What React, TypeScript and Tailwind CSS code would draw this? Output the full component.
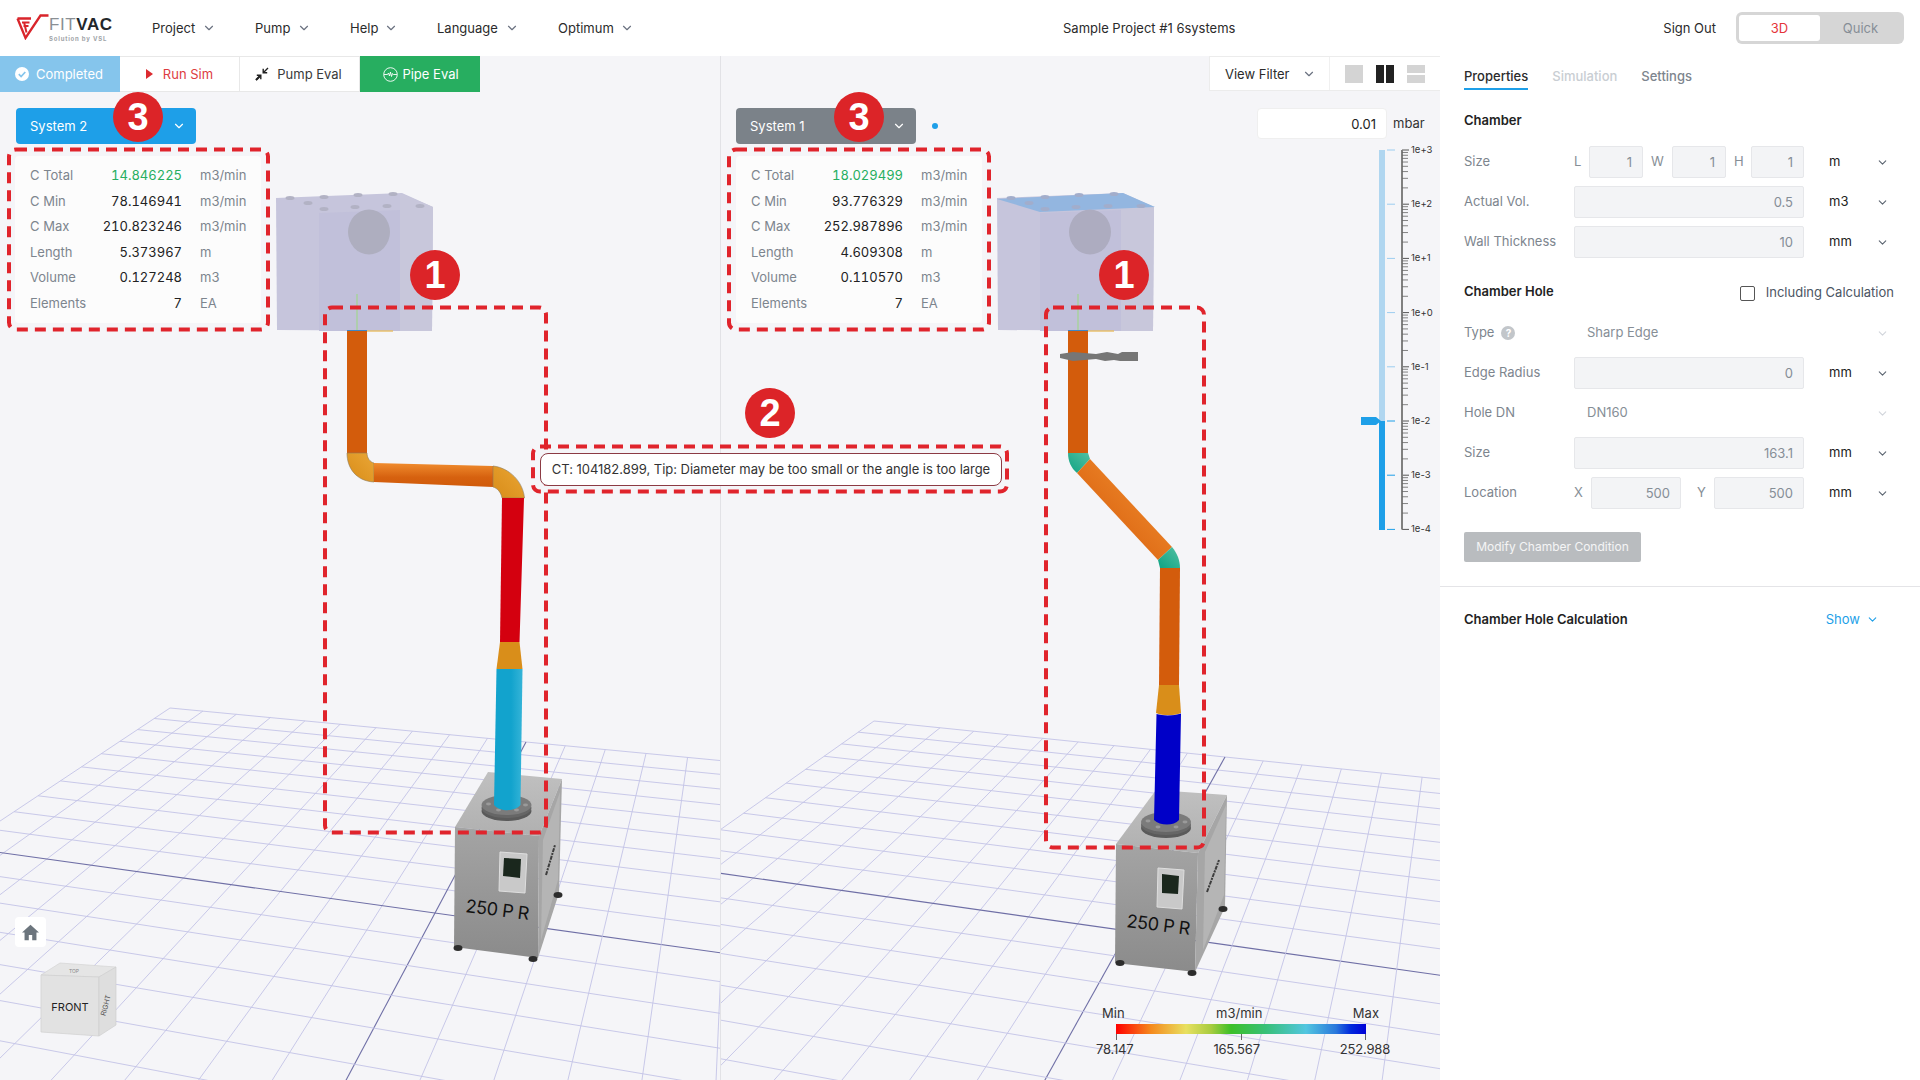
import React from "react";
import { ChevronDown } from "lucide-react";

type Pt = [number, number];

function makeHomography(p00: Pt, p10: Pt, p01: Pt, p11: Pt) {
  const [x0, y0] = p00;
  const [x1, y1] = p10;
  const [x2, y2] = p11;
  const [x3, y3] = p01;
  const dx1 = x1 - x2, dx2 = x3 - x2, dx3 = x0 - x1 + x2 - x3;
  const dy1 = y1 - y2, dy2 = y3 - y2, dy3 = y0 - y1 + y2 - y3;
  const det = dx1 * dy2 - dx2 * dy1;
  const g = (dx3 * dy2 - dx2 * dy3) / det;
  const h = (dx1 * dy3 - dx3 * dy1) / det;
  const a = x1 - x0 + g * x1, b = x3 - x0 + h * x3, c = x0;
  const d = y1 - y0 + g * y1, e = y3 - y0 + h * y3, f = y0;
  return {
    denom: (s: number, t: number) => g * s + h * t + 1,
    map: (s: number, t: number): Pt => {
      const w = g * s + h * t + 1;
      return [(a * s + b * t + c) / w, (d * s + e * t + f) / w];
    },
  };
}

function Grid({ p00, p10, p01, p11 }: { p00: Pt; p10: Pt; p01: Pt; p11: Pt }) {
  const H = makeHomography(p00, p10, p01, p11);
  const lines: React.ReactNode[] = [];
  const draw = (fn: (q: number) => [number, number], key: string, axis: boolean) => {
    let end = 1;
    for (let q = 0; q <= 1; q += 0.01) {
      const [s, t] = fn(q);
      if (H.denom(s, t) < 0.08) break;
      end = q;
    }
    const a = H.map(...fn(0));
    const b = H.map(...fn(end));
    lines.push(
      <line key={key} x1={a[0]} y1={a[1]} x2={b[0]} y2={b[1]} stroke={axis ? "#6f6fa6" : "#c3c3e6"} strokeWidth={axis ? 1.1 : 0.9} />
    );
  };
  for (let i = 0; i <= 20; i++) {
    const v = i / 10;
    draw((q) => [v, q * 2], `a${i}`, i === 10);
    draw((q) => [q * 2, v], `b${i}`, i === 10);
  }
  return <g>{lines}</g>;
}

const poly = (pts: number[]) => pts.join(" ");

function Pump({ right }: { right: boolean }) {
  const top = right
    ? [1156, 790, 1227, 795, 1198, 853, 1116, 844]
    : [488, 772, 562, 779, 539, 836, 455, 827];
  const front = right
    ? [1116, 844, 1198, 853, 1195, 972, 1115, 963]
    : [455, 827, 539, 836, 538, 958, 454, 947];
  const side = right
    ? [1198, 853, 1227, 795, 1225, 907, 1195, 972]
    : [539, 836, 562, 779, 559, 893, 538, 958];
  const panel = right
    ? [1205, 852, 1226, 805, 1224, 895, 1203, 950]
    : [543, 840, 560, 792, 558, 880, 541, 940];
  const disp = right
    ? [1158, 868, 1184, 870, 1182, 909, 1157, 907]
    : [500, 852, 527, 854, 525, 893, 499, 891];
  const scr = right
    ? [1162, 874, 1179, 876, 1178, 894, 1162, 893]
    : [504, 858, 521, 859, 520, 878, 503, 876];
  const flange = right ? [1166, 822] : [506.5, 805];
  const feet = right
    ? [[1120, 963], [1192, 973], [1223, 909]]
    : [[458, 948], [533, 959], [558, 895]];
  const text = right ? [1126, 927] : [465, 912];
  const logo = right ? [[1207, 892], [1219, 860]] : [[546, 875], [555, 845]];
  const boltOffsets = [[-18, -1], [-8, 5], [10, 5], [19, 0], [-8, -6], [10, -6]];
  return (
    <g>
      <polygon points={poly(top)} fill="url(#pumpTop)" />
      <polygon points={poly(front)} fill="url(#pumpFront)" />
      <polygon points={poly(side)} fill="#a6a6a6" />
      <polygon points={poly(panel)} fill="#b5b5b5" />
      <polygon points={poly(disp)} fill="#c9c9c9" stroke="#dedede" strokeWidth="1" />
      <polygon points={poly(scr)} fill="#1a271d" />
      <line x1={logo[0][0]} y1={logo[0][1]} x2={logo[1][0]} y2={logo[1][1]} stroke="#3d3d3d" strokeWidth="2" strokeDasharray="4 1 2 1" />
      {feet.map((f, i) => (
        <ellipse key={i} cx={f[0]} cy={f[1]} rx="4.5" ry="3" fill="#2c2c2c" />
      ))}
      <ellipse cx={flange[0]} cy={flange[1] + 6} rx="25" ry="10" fill="#5a5a5a" />
      <ellipse cx={flange[0]} cy={flange[1] + 3} rx="25" ry="10" fill="#666666" />
      <ellipse cx={flange[0]} cy={flange[1]} rx="25" ry="10" fill="#7b7b7b" />
      {boltOffsets.map((o, i) => (
        <ellipse key={i} cx={flange[0] + o[0]} cy={flange[1] + o[1]} rx="2.5" ry="1.4" fill="#9a9a9a" />
      ))}
      <text
        x={text[0]}
        y={text[1]}
        fontSize="18"
        letterSpacing="-0.4"
        fontFamily="Inter, sans-serif"
        fill="#111"
        transform={`rotate(7 ${text[0]} ${text[1]})`}
      >
        250 P R
      </text>
    </g>
  );
}

function Chamber({ ox, blue }: { ox: number; blue: boolean }) {
  const bolts = [
    [290, 198], [308, 203], [324, 197], [324, 209], [355, 207], [358, 195], [387, 206], [393, 194], [420, 206],
  ];
  return (
    <g transform={`translate(${ox} 0)`}>
      <polygon points="276,198 402,193 433,207 432,331 277,330" fill="#c6c5dc" />
      <polygon points="319,213 400,210 400,331 319,331" fill="#c1c0da" />
      <polygon points="400,193 433,207 432,331 400,331" fill="#c8c7db" />
      {blue && <polygon points="276,199 402,193 434,207 319,212" fill="#93b6e0" />}
      {bolts.map((b, i) => (
        <ellipse key={i} cx={b[0]} cy={b[1]} rx="4.5" ry="2" fill={blue ? "#a2adcb" : "#b2b2c4"} />
      ))}
      <ellipse cx="369" cy="232" rx="21" ry="22.5" fill={blue ? "#adacc0" : "#aeaebf"} />
      <line x1="357" y1="294" x2="357" y2="331" stroke="#a6d39a" strokeWidth="1.4" />
      <line x1="367" y1="331" x2="393" y2="331" stroke="#e9bd63" strokeWidth="1.4" />
      <line x1="347" y1="331" x2="367" y2="331" stroke="#3f86c4" strokeWidth="2" />
    </g>
  );
}

function Scene({ side }: { side: "left" | "right" }) {
  const left = side === "left";
  return (
    <svg
      className="absolute inset-0 w-full h-full"
      viewBox={left ? "0 56 720 1024" : "720 56 720 1024"}
      preserveAspectRatio="none"
    >
      <defs>
        <linearGradient id="pumpFront" x1="0" y1="0" x2="0" y2="1">
          <stop offset="0" stopColor="#a4a4a4" />
          <stop offset="1" stopColor="#8b8b8b" />
        </linearGradient>
        <linearGradient id="pumpTop" x1="0" y1="0" x2="0" y2="1">
          <stop offset="0" stopColor="#c0c0c0" />
          <stop offset="1" stopColor="#b0b0b0" />
        </linearGradient>
        <linearGradient id={`diag${side}`} x1="0" y1="0" x2="0" y2="1">
          <stop offset="0" stopColor="#f08c2e" />
          <stop offset="0.6" stopColor="#d6610f" />
          <stop offset="1" stopColor="#d05a0a" />
        </linearGradient>
        <linearGradient id={`diagR${side}`} x1="1" y1="0" x2="0" y2="1">
          <stop offset="0.15" stopColor="#f08c2e" />
          <stop offset="0.55" stopColor="#e2721b" />
          <stop offset="0.85" stopColor="#d05a0a" />
        </linearGradient>
        <linearGradient id={`elb${side}`} x1="1" y1="0" x2="0" y2="1">
          <stop offset="0" stopColor="#eaa636" />
          <stop offset="1" stopColor="#d88c18" />
        </linearGradient>
        <linearGradient id={`cy${side}`} x1="0" y1="0" x2="1" y2="0">
          <stop offset="0" stopColor="#12a3cd" />
          <stop offset="0.6" stopColor="#12a3cd" />
          <stop offset="1" stopColor="#35b4d8" />
        </linearGradient>
        <linearGradient id={`gr${side}`} x1="0" y1="1" x2="1" y2="0">
          <stop offset="0" stopColor="#0fa383" />
          <stop offset="1" stopColor="#52c0a2" />
        </linearGradient>
      </defs>
      {left ? (
        <>
          <Grid p00={[170, 708]} p10={[526, 742]} p01={[-39, 847]} p11={[435, 913]} />
          <Chamber ox={0} blue={false} />
          <Pump right={false} />
          <polygon points="347,331 367,331 367,453 347,453" fill="#d35c0c" />
          <path d="M347 453 C347 468 356 481 374 482 L374 463 C370 462 367 458 367 453 Z" fill={`url(#elb${side})`} stroke="#8d7a5a" strokeWidth="0.6" />
          <polygon points="374,463 493,466 493,487 374,482" fill={`url(#diag${side})`} />
          <path d="M493 466 C510 468 523 482 524.5 498 L502 498 C501 492 497 488 493 487 Z" fill={`url(#elb${side})`} stroke="#8d7a5a" strokeWidth="0.6" />
          <polygon points="502,498 524,498 519.5,642 500,642" fill="#d4000f" />
          <polygon points="500,642 519.5,642 522.5,669 496.5,669" fill="#d98e1a" />
          <path d="M496.5 669 L522.5 669 L520.5 805 C515 812 500 812 494 805 Z" fill={`url(#cy${side})`} />
        </>
      ) : (
        <>
          <Grid p00={[874, 721]} p10={[1225, 757]} p01={[669, 866]} p11={[1128, 931]} />
          <Chamber ox={721} blue />
          <Pump right />
          <polygon points="1068,331 1088,331 1088,453 1068,453" fill="#d35c0c" />
          <path d="M1060 354 L1073 352 L1096 354 L1107 352 L1118 354 L1122 352 L1138 352 L1138 361 L1120 361 L1114 360 L1105 361 L1096 359 L1073 361 L1060 358 Z" fill="#767676" />
          <path d="M1068 453 L1088 453 L1090 459 L1077 473 C1071 468 1068 461 1068 453 Z" fill={`url(#gr${side})`} />
          <polygon points="1090,459 1172,547 1158,560 1077,473" fill={`url(#diagR${side})`} />
          <path d="M1172 547 C1177 553 1180 560 1180 568 L1160 568 L1158 560 Z" fill={`url(#gr${side})`} />
          <polygon points="1160,568 1180,568 1179,685 1159,685" fill="#d35c0c" />
          <path d="M1159 685 L1179 685 L1181 713 C1174 716 1163 716 1156 713 Z" fill="#d98e1a" />
          <path d="M1156.5 714 C1163 716 1174 716 1181 713.5 L1179 820 C1174 826 1160 826 1154 820 Z" fill="#0000c8" />
        </>
      )}
      {left && (
        <g>
          <polygon points="41,975 60,963 116,967 99,977" fill="#e5e5e5" stroke="#d4d4d4" strokeWidth="0.7" />
          <polygon points="41,975 99,977 99,1036 41,1032" fill="#e2e2e2" stroke="#d0d0d0" strokeWidth="0.7" />
          <polygon points="99,977 116,967 116,1025 99,1036" fill="#dedede" stroke="#d0d0d0" strokeWidth="0.7" />
          <text x="70" y="1011" textAnchor="middle" fontSize="11" fontFamily="Inter, sans-serif" fill="#222">FRONT</text>
          <text x="108" y="1006" textAnchor="middle" fontSize="7" fontFamily="Inter, sans-serif" fill="#555" transform="rotate(-75 108 1006)">RIGHT</text>
          <text x="74" y="973" textAnchor="middle" fontSize="5" fontFamily="Inter, sans-serif" fill="#888">TOP</text>
        </g>
      )}
    </svg>
  );
}

function Stats({ rows }: { rows: [string, string, string][] }) {
  return (
    <div className="ml-[15px] mt-3 w-[246px] h-[167px] bg-[#fcfcfc] rounded-sm pl-[15px] pt-[7px] relative">
      {rows.map((r, i) => (
        <div key={r[0]} className="flex items-center h-[25.6px] text-[13px]">
          <span className="w-[52px] text-[#7d858e] whitespace-nowrap">{r[0]}</span>
          <span className={`w-[100px] text-right tabular-nums ${i === 0 ? "text-[#27ae60]" : "text-[#222]"}`}>{r[1]}</span>
          <span className="ml-[18px] text-[#7d858e]">{r[2]}</span>
        </div>
      ))}
    </div>
  );
}

const leftStats: [string, string, string][] = [
  ["C Total", "14.846225", "m3/min"],
  ["C Min", "78.146941", "m3/min"],
  ["C Max", "210.823246", "m3/min"],
  ["Length", "5.373967", "m"],
  ["Volume", "0.127248", "m3"],
  ["Elements", "7", "EA"],
];
const rightStats: [string, string, string][] = [
  ["C Total", "18.029499", "m3/min"],
  ["C Min", "93.776329", "m3/min"],
  ["C Max", "252.987896", "m3/min"],
  ["Length", "4.609308", "m"],
  ["Volume", "0.110570", "m3"],
  ["Elements", "7", "EA"],
];

function Logo() {
  return (
    <div className="flex items-start w-[100px] h-[30px] relative">
      <svg width="34" height="26" viewBox="0 0 34 26" className="shrink-0 mt-[1px]">
        <path d="M1.5 4.5 L15 4.5 M1.5 4.5 L9.5 24 L24.5 1.5 L32.5 1.5" fill="none" stroke="#d9252b" strokeWidth="2.3" />
        <path d="M6 8.5 L13.5 8.5 M7.5 12 L12.5 12 M8 8 L10.5 18.5" fill="none" stroke="#d9252b" strokeWidth="2" />
      </svg>
      <div className="-ml-[1px] mt-[2px] flex flex-col">
        <div className="text-[17px] leading-[20px] tracking-[0.6px] font-['Liberation_Sans',sans-serif] flex">
          <span className="text-[#8a8f94]">FIT</span>
          <span className="text-[#23272b] font-bold">VAC</span>
        </div>
        <div className="text-[6px] leading-[7px] tracking-[0.8px] text-[#a0a4a8] font-bold whitespace-nowrap">Solution by VSL</div>
      </div>
    </div>
  );
}

function NavItem({ label, w }: { label: string; w: string }) {
  return (
    <div className={`flex items-center justify-between ${w}`}>
      <span className="pt-px">{label}</span>
      <ChevronDown size={14} color="#6b7280" />
    </div>
  );
}

function Header() {
  return (
    <header className="h-14 bg-white flex items-center text-[13px] text-[#2b2b2b] shrink-0 relative">
      <div className="ml-4 w-[136px]"><Logo /></div>
      <div className="flex items-center">
        <NavItem label="Project" w="w-[64px] mr-[39px]" />
        <NavItem label="Pump" w="w-[56px] mr-[39px]" />
        <NavItem label="Help" w="w-[48px] mr-[39px]" />
        <NavItem label="Language" w="w-[82px] mr-[39px]" />
        <NavItem label="Optimum" w="w-[76px]" />
      </div>
      <div className="ml-[429px] whitespace-nowrap pt-px">Sample Project #1 6systems</div>
      <div className="ml-auto flex items-center mr-4">
        <span className="mr-5 pt-px">Sign Out</span>
        <div className="w-[168px] h-8 bg-[#d6d6d6] rounded-md p-[3px] flex items-center">
          <div className="w-[81px] h-[26px] bg-white rounded-[3px] flex items-center justify-center text-[#e5343a] pt-px">3D</div>
          <div className="flex-1 text-center text-[#868e96] pt-px">Quick</div>
        </div>
      </div>
    </header>
  );
}

function Toolbar() {
  const cell = "w-[120px] h-9 flex items-center justify-center text-[13px] border-y border-r border-[#e8e8e8]";
  return (
    <div className="flex h-9">
      <div className="w-[120px] h-9 bg-[#85c5ec] text-white flex items-center justify-center text-[13px] gap-[7px] pr-[2px]">
        <svg width="14" height="14" viewBox="0 0 14 14">
          <circle cx="7" cy="7" r="7" fill="#fff" />
          <path d="M3.8 7.2 L6.1 9.5 L10.3 5" fill="none" stroke="#85c5ec" strokeWidth="1.7" />
        </svg>
        <span className="pt-px">Completed</span>
      </div>
      <div className={`${cell} bg-white text-[#dd3c3f] gap-[10px]`}>
        <svg width="7" height="10" viewBox="0 0 7 10"><path d="M0 0 L7 5 L0 10 Z" fill="#dc2b30" /></svg>
        <span className="pt-px">Run Sim</span>
      </div>
      <div className={`${cell} bg-white text-[#3a3a3a] gap-2 pr-[2px]`}>
        <svg width="14" height="14" viewBox="0 0 14 14" fill="none" stroke="#222" strokeWidth="1.4">
          <path d="M13 1 L8.5 5.5 M8.2 1.8 L8.2 5.8 L12.2 5.8" />
          <path d="M1 13 L5.5 8.5 M1.8 8.2 L5.8 8.2 L5.8 12.2" />
          <path d="M4.5 9.5 L1 13" strokeWidth="2" />
        </svg>
        <span className="pt-px">Pump Eval</span>
      </div>
      <div className="w-[120px] h-9 bg-[#27ae60] text-white flex items-center justify-center text-[13px] gap-[4px] pl-[2px]">
        <svg width="15" height="15" viewBox="0 0 15 15" fill="none" stroke="#fff" strokeWidth="0.9">
          <circle cx="7.5" cy="7.5" r="6.8" />
          <path d="M1 7.5 L4.5 7.5 L5.5 6 L6.5 9 L7.5 5 L8.5 9.5 L9.5 6.5 L10.5 7.5 L14 7.5" />
        </svg>
        <span className="pt-px">Pipe Eval</span>
      </div>
    </div>
  );
}

function SysBtn({ label, cls }: { label: string; cls: string }) {
  return (
    <div className={`w-[180px] h-9 rounded-sm ${cls} text-white text-[13px] flex items-center justify-between pl-[14px] pr-[10px]`}>
      <span className="pt-px">{label}</span>
      <ChevronDown size={14} color="#fff" />
    </div>
  );
}

function Scale() {
  const decades = ["1e+3", "1e+2", "1e+1", "1e+0", "1e-1", "1e-2", "1e-3", "1e-4"];
  const spacing = 54.2;
  const y0 = 94;
  const minors: number[] = [];
  for (let d = 0; d < 7; d++) {
    for (let n = 2; n < 10; n++) {
      minors.push(y0 + d * spacing + (1 - Math.log10(n)) * spacing);
    }
  }
  return (
    <svg className="absolute left-[640px] top-0 w-[80px] h-[520px]" viewBox="0 0 80 520">
      <rect x="18" y="94" width="6" height="271" fill="#b0d6f0" />
      <rect x="18" y="365" width="6" height="109" fill="#1e9fe8" />
      <path d="M0 361 L15 361 L20 365 L15 369 L0 369 Z" fill="#1e9fe8" />
      {decades.map((d, i) => {
        const y = y0 + i * spacing;
        return (
          <g key={d}>
            <line x1="26" x2="34" y1={y} y2={y} stroke={i < 5 ? "#9ccdf0" : "#1e9fe8"} strokeWidth="1" />
            <line x1="41" x2="48" y1={y} y2={y} stroke="#555" strokeWidth="1" />
            <text x="50" y={y + 3} fontSize="9.5" fontFamily="Inter, sans-serif" fill="#333">{d}</text>
          </g>
        );
      })}
      <line x1="41" x2="41" y1="94" y2={y0 + 7 * spacing} stroke="#808080" strokeWidth="2" />
      {minors.map((y, i) => (
        <line key={i} x1="41" x2="47" y1={y} y2={y} stroke="#666" strokeWidth="0.8" />
      ))}
    </svg>
  );
}

function Legend() {
  const gradient = "bg-[linear-gradient(to_right,#ff0000_0%,#f58a1e_14%,#e8e060_28%,#a8cc40_38%,#3cc028_46%,#38c078_60%,#52c6e0_76%,#2a78dc_88%,#0028dc_94%,#0000d8_100%)]";
  return (
    <div className="absolute left-[395px] top-[947px] w-[250px]">
      <div className="flex justify-between text-[13px] text-[#333] h-[21px] relative pt-px">
        <span className="-ml-[14px]">Min</span>
        <span className="pl-[1px]">m3/min</span>
        <span className="-mr-[13px]">Max</span>
      </div>
      <div className={`h-[10px] ${gradient}`} />
      <div className="flex justify-between h-[6px]">
        <div className="w-px bg-[#666]" />
        <div className="w-px bg-[#666]" />
        <div className="w-px bg-[#666]" />
      </div>
      <div className="flex justify-between text-[13px] text-[#333] tracking-[-0.2px] leading-4 mt-[1px]">
        <span className="-ml-[20px]">78.147</span>
        <span>165.567</span>
        <span className="-mr-[24px]">252.988</span>
      </div>
    </div>
  );
}

function Viewports() {
  return (
    <div className="relative flex-1 grid grid-cols-2 min-w-0">
      <div className="relative overflow-hidden h-[1024px]">
        <Scene side="left" />
        <div className="relative">
          <Toolbar />
          <div className="ml-4 mt-4"><SysBtn label="System 2" cls="bg-[#1e9fe8]" /></div>
          <Stats rows={leftStats} />
        </div>
        <div className="absolute left-[15px] top-[861px] w-[31px] h-[30px] bg-white rounded-sm flex items-center justify-center">
          <svg width="17" height="17" viewBox="2 3 20 18"><path d="M10 21v-6h4v6h5v-9h3L12 3 2 12h3v9z" fill="#6c757d" /></svg>
        </div>
      </div>
      <div className="relative overflow-hidden h-[1024px] border-l border-[#e2e2e6]">
        <div className="absolute -left-px top-0 w-[720px] h-[1024px]"><Scene side="right" /></div>
        <div className="relative -ml-px">
          <div className="h-9 flex justify-end">
            <div className="w-[231px] h-[35px] bg-white border-y border-l border-[#ececec] flex items-center">
              <span className="ml-[15px] text-[13px] text-[#2b2b2b] pt-[2px]">View Filter</span>
              <ChevronDown size={14} color="#6b7280" className="ml-[12px]" />
              <div className="w-px h-full bg-[#f0f0f0] ml-[13px]" />
              <div className="ml-[15px] w-[18px] h-[18px] bg-[#d4d4d4]" />
              <div className="ml-[13px] w-[18px] h-[18px] flex gap-[2px]">
                <div className="flex-1 bg-[#222]" />
                <div className="flex-1 bg-[#222]" />
              </div>
              <div className="ml-[13px] w-[18px] h-[18px] flex flex-col gap-[2px]">
                <div className="flex-1 bg-[#d4d4d4]" />
                <div className="flex-1 bg-[#d4d4d4]" />
              </div>
            </div>
          </div>
          <div className="ml-4 mt-4 flex items-center">
            <SysBtn label="System 1" cls="bg-[#7b8289]" />
            <div className="ml-4 w-[6px] h-[6px] rounded-full bg-[#1e9fe8]" />
            <div className="ml-auto -mt-[5px] flex items-center w-[183px]">
              <div className="w-[130px] h-[31px] bg-white border border-[#efefef] rounded-sm text-right text-[13px] text-[#222] leading-[30px] pr-[10px]">0.01</div>
              <span className="ml-[6px] text-[13px] text-[#333] pt-px">mbar</span>
            </div>
          </div>
          <div className="ml-px"><Stats rows={rightStats} /></div>
        </div>
        <Scale />
        <Legend />
      </div>
      <Annotations />
    </div>
  );
}

function Badge({ n, cls }: { n: string; cls: string }) {
  return (
    <div className={`absolute w-[50px] h-[50px] rounded-full bg-[#dc2428] text-white text-[38px] font-bold leading-[50px] text-center font-['Liberation_Sans',sans-serif] ${cls}`}>
      {n}
    </div>
  );
}

function Annotations() {
  const rects = [
    [9, 149.5, 259, 180],
    [729, 149.5, 260, 180],
    [325, 307.5, 221, 525],
    [1046, 307.5, 158, 540],
    [533, 446.5, 474, 45],
  ];
  return (
    <>
      <svg className="absolute left-0 top-0 w-[1440px] h-[1024px] pointer-events-none" viewBox="0 56 1440 1024">
        {rects.map((r, i) => (
          <rect
            key={i}
            x={r[0]}
            y={r[1]}
            width={r[2]}
            height={r[3]}
            rx="7"
            fill="none"
            stroke="#e0242c"
            strokeWidth="4"
            strokeDasharray="11 7"
          />
        ))}
      </svg>
      <div className="absolute left-[540px] top-[397px] w-[462px] h-[33px] bg-white border border-[#8c3b44] rounded-lg text-[13px] text-[#333] leading-[31px] text-center whitespace-nowrap tracking-[-0.03px]">
        CT: 104182.899, Tip: Diameter may be too small or the angle is too large
      </div>
      <Badge n="3" cls="left-[113px] top-[36px]" />
      <Badge n="3" cls="left-[834px] top-[36px]" />
      <Badge n="1" cls="left-[410px] top-[194px]" />
      <Badge n="1" cls="left-[1099px] top-[194px]" />
      <Badge n="2" cls="left-[745px] top-[332px]" />
    </>
  );
}

const labelCls = "w-[110px] text-[#7d858e] whitespace-nowrap";
const inputCls = "h-8 bg-[#f3f4f6] border border-[#e6e7ea] rounded-[2px] text-right pr-[10px] leading-[30px] text-[#868e96]";

function Unit({ u, muted }: { u?: string; muted?: boolean }) {
  return (
    <div className="ml-[25px] w-[60px] flex items-center justify-between">
      <span className="text-[#222]">{u}</span>
      <ChevronDown size={13} color={muted ? "#d1d5db" : "#5b6470"} />
    </div>
  );
}

function Row({ label, children, unit, muted }: { label: React.ReactNode; children: React.ReactNode; unit?: string; muted?: boolean }) {
  return (
    <div className="flex items-center h-8">
      <div className={labelCls}>{label}</div>
      <div className="w-[230px] flex items-center">{children}</div>
      <Unit u={unit} muted={muted} />
    </div>
  );
}

function Sidebar() {
  return (
    <aside className="w-[480px] h-[1024px] bg-white shrink-0 text-[13px]">
      <div className="px-6">
        <div className="flex h-[34px] items-end font-medium">
          <div className="h-[24px] leading-5 border-b-2 border-[#1e9fe8] text-[#2b2b2b]">Properties</div>
          <div className="h-[24px] leading-5 ml-6 text-[#c9ced3]">Simulation</div>
          <div className="h-[24px] leading-5 ml-[24px] text-[#7d858e]">Settings</div>
        </div>
        <div className="mt-[20px] h-5 leading-5 font-semibold text-[#222]">Chamber</div>
        <div className="mt-[16px] flex flex-col gap-2">
          <Row label="Size" unit="m">
            <span className="w-[15px] text-[#868e96]">L</span>
            <div className={`${inputCls} w-[54px]`}>1</div>
            <span className="w-[29px] pl-2 text-[#868e96]">W</span>
            <div className={`${inputCls} w-[54px]`}>1</div>
            <span className="w-[25px] pl-2 text-[#868e96]">H</span>
            <div className={`${inputCls} w-[53px]`}>1</div>
          </Row>
          <Row label="Actual Vol." unit="m3"><div className={`${inputCls} w-full`}>0.5</div></Row>
          <Row label="Wall Thickness" unit="mm"><div className={`${inputCls} w-full`}>10</div></Row>
        </div>
        <div className="mt-[24px] h-5 flex items-center justify-between">
          <span className="font-semibold text-[#222]">Chamber Hole</span>
          <label className="flex items-center mr-[2px] text-[#4b5563] pt-[2px]">
            <span className="w-[15px] h-[15px] border-[1.5px] border-[#555] rounded-[2px] mr-[11px]" />
            <span>Including Calculation</span>
          </label>
        </div>
        <div className="mt-[15px] flex flex-col gap-2">
          <Row
            muted
            label={
              <span className="flex items-center gap-[7px]">
                Type
                <span className="w-[14px] h-[14px] rounded-full bg-[#c2c6ca] text-white text-[10px] font-bold leading-[14px] text-center">?</span>
              </span>
            }
          >
            <span className="pl-[13px] text-[#868e96]">Sharp Edge</span>
          </Row>
          <Row label="Edge Radius" unit="mm"><div className={`${inputCls} w-full`}>0</div></Row>
          <Row muted label="Hole DN"><span className="pl-[13px] text-[#868e96]">DN160</span></Row>
          <Row label="Size" unit="mm"><div className={`${inputCls} w-full`}>163.1</div></Row>
          <Row label="Location" unit="mm">
            <span className="w-[17px] text-[#868e96]">X</span>
            <div className={`${inputCls} w-[90px]`}>500</div>
            <span className="w-[33px] pl-4 text-[#868e96]">Y</span>
            <div className={`${inputCls} w-[90px]`}>500</div>
          </Row>
        </div>
        <div className="mt-[23px] w-[177px] h-[30px] bg-[#b9bcbf] rounded-[2px] text-white/85 text-[12px] leading-[30px] text-center whitespace-nowrap">
          Modify Chamber Condition
        </div>
      </div>
      <div className="mt-6 border-t border-[#e4e4e7] pl-6 pr-[41px] flex items-center justify-between h-[66px]">
        <span className="font-semibold text-[#222]">Chamber Hole Calculation</span>
        <span className="flex items-center gap-[6px] text-[#1e9fe8]">
          Show
          <ChevronDown size={13} color="#1e9fe8" />
        </span>
      </div>
    </aside>
  );
}

export default function App() {
  return (
    <div className="w-[1920px] h-[1080px] overflow-hidden bg-[#f5f5f8] flex flex-col font-['Inter',sans-serif]">
      <Header />
      <div className="flex flex-1 min-h-0">
        <Viewports />
        <Sidebar />
      </div>
    </div>
  );
}
